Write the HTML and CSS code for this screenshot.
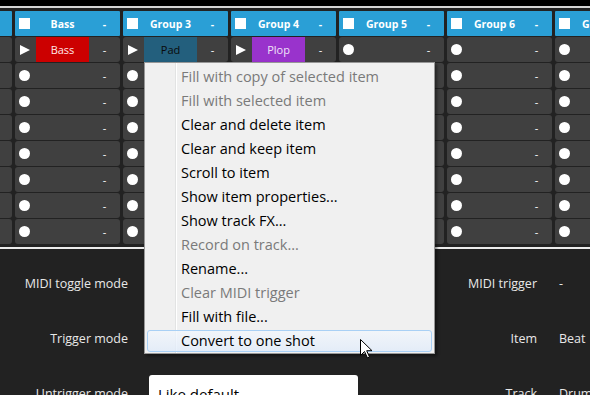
FILE: index.html
```html
<!DOCTYPE html>
<html lang="en">
<head>
  <meta charset="UTF-8">
  <title>Clip Launcher</title>
  <link rel="stylesheet" href="styles.css">
</head>
<body>
  <div class="topbar"></div>
  <div class="grid" id="grid"></div>
  <div class="divider"></div>

  <div class="panel">
    <div class="lbl">MIDI toggle mode</div>
    <div class="box small"></div>
    <div class="lbl">MIDI trigger</div>
    <div class="val">-</div>

    <div class="lbl">Trigger mode</div>
    <div class="box small"></div>
    <div class="lbl">Item</div>
    <div class="val">Beat</div>

    <div class="lbl">Untrigger mode</div>
    <div class="box">Like default</div>
    <div class="lbl">Track</div>
    <div class="val">Drums</div>
  </div>

  <!-- Context menu -->
  <div class="menu">
    <div class="mi off">Fill with copy of selected item</div>
    <div class="mi off">Fill with selected item</div>
    <div class="mi">Clear and delete item</div>
    <div class="mi">Clear and keep item</div>
    <div class="mi">Scroll to item</div>
    <div class="mi">Show item properties...</div>
    <div class="mi">Show track FX...</div>
    <div class="mi off">Record on track...</div>
    <div class="mi">Rename...</div>
    <div class="mi off">Clear MIDI trigger</div>
    <div class="mi">Fill with file...</div>
    <div class="mi hot">Convert to one shot</div>
  </div>

  <svg class="cursor" width="13" height="20" viewBox="0 0 13 20">
    <path d="M0.5 0.5 L0.5 16.5 L4.5 12.5 L7.5 19 L9.5 18 L6.7 11.7 L12 11.7 Z" fill="#fff" stroke="#000" stroke-width="1"/>
  </svg>

  <script>
    // Track columns; first one is scrolled half out of view
    const tracks = [
      {name: 'Drums'},
      {name: 'Bass', clip: {text: 'Bass', cls: 'red'}},
      {name: 'Group 3', clip: {text: 'Pad', cls: 'teal'}},
      {name: 'Group 4', clip: {text: 'Plop', cls: 'purple'}},
      {name: 'Group 5'},
      {name: 'Group 6'},
      {name: 'Group 7'}
    ];
    const rows = 8;
    const grid = document.getElementById('grid');

    tracks.forEach(t => {
      const col = document.createElement('div');
      col.className = 'col';
      let html = '<div class="cell head"><span class="ico"><i class="sq"></i></span>' +
                 '<span class="name">' + t.name + '</span><span class="dash">-</span></div>';
      for (let r = 0; r < rows; r++) {
        if (r === 0 && t.clip) {
          html += '<div class="cell"><span class="ico"><i class="play"></i></span>' +
                  '<span class="name clip ' + t.clip.cls + '">' + t.clip.text + '</span>' +
                  '<span class="dash">-</span></div>';
        } else {
          html += '<div class="cell"><span class="ico"><i class="dot"></i></span>' +
                  '<span class="name"></span><span class="dash">-</span></div>';
        }
      }
      col.innerHTML = html;
      grid.appendChild(col);
    });
  </script>
</body>
</html>
```
FILE: styles.css
```css
:root {
  --bg: #222222;
  --cell: #404040;
  --head: #2a9fd6;
  --text: #e8e8e8;
  --menu-bg: #f0f0f0;
}
* { box-sizing: border-box; }
body {
  margin: 0; height: 395px; overflow: hidden;
  background: var(--bg);
  font-family: 'Open Sans', 'Noto Sans', sans-serif;
  color: var(--text);
}
.topbar { height: 8px; background: #000; border-bottom: 2px solid #d6d6d6; }

/* clip grid */
.grid { display: flex; gap: 3px; padding: 3px 0; margin-left: -93px; }
.col { width: 105px; flex: none; display: flex; flex-direction: column; gap: 1px; }
.cell {
  height: 25px; display: flex; align-items: center;
  background: var(--cell); border-radius: 3px;
  color: #fff; font-size: 11px; white-space: nowrap;
}
.cell.head { background: var(--head); font-weight: bold; font-size: 10.5px; border-radius: 1px; }
.ico { width: 21px; flex: none; padding-left: 4px; display: flex; align-items: center; }
.ico i { display: block; }
.sq { width: 11px; height: 11px; background: #fff; }
.dot { width: 11px; height: 11px; border-radius: 50%; background: #fff; }
.play {
  width: 0; height: 0; margin-left: 1px;
  border-left: 10px solid #fff;
  border-top: 5px solid transparent; border-bottom: 5px solid transparent;
}
.name { width: 53px; flex: none; text-align: center; }
.clip {
  height: 100%; display: flex; align-items: center; justify-content: center;
  font-size: 11px; font-weight: normal;
}
.clip.red { background: #cc0000; color: #ffe8e8; }
.clip.teal { background: #235f7d; color: #0a0a0a; }
.clip.purple { background: #9933cc; color: #f0e4f8; }
.dash { flex: 1; text-align: center; }

.divider { height: 2px; background: #ececec; }

/* properties panel */
.panel {
  display: grid;
  grid-template-columns: 128px 209px 158px 1fr;
  grid-auto-rows: 55px;
  column-gap: 21px;
  align-items: center;
  padding-top: 7px;
  font-size: 12.5px;
}
.lbl { text-align: right; }
.val { padding-left: 1px; }
.box {
  height: 37px; background: #fff; border-radius: 3px;
  display: flex; align-items: center; padding-left: 9px;
  color: #000; font-size: 15px;
}
.box.small { height: 26px; }

/* context menu */
.menu {
  position: absolute; left: 144px; top: 62px; width: 291px;
  display: flex; flex-direction: column; gap: 2px;
  border: 1px solid #979797;
  background: linear-gradient(to right, var(--menu-bg) 30px, #e2e3e3 30px, #e2e3e3 31px, #fff 31px, #fff 32px, var(--menu-bg) 32px);
  padding: 3px 2px 1px;
  box-shadow: 2px 2px 3px rgba(0,0,0,0.45);
  font-size: 14.5px; color: #000;
}
.mi {
  height: 22px; line-height: 20px;
  padding-left: 33px; border: 1px solid transparent; border-radius: 3px;
  white-space: nowrap;
}
.mi.off { color: #7a7a7a; }
.mi.hot {
  border-color: #a9d0f5;
  background: linear-gradient(rgba(242,247,253,0.75), rgba(224,235,250,0.75));
}
.cursor { position: absolute; left: 360px; top: 339px; }
```
